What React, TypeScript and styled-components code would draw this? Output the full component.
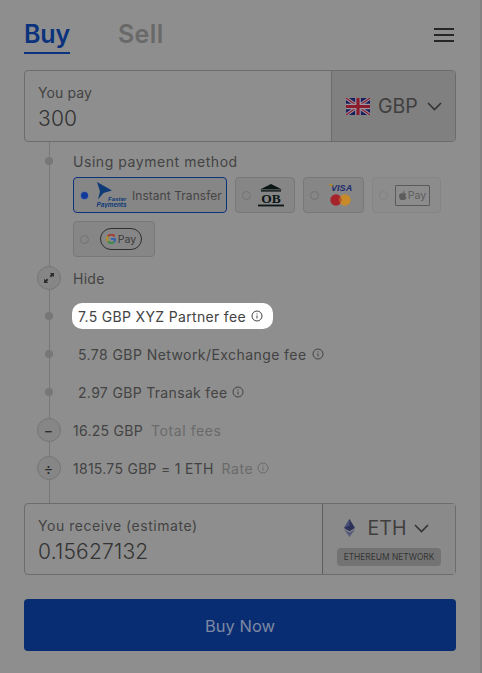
import React from "react";
import styled, { createGlobalStyle } from "styled-components";

const Global = createGlobalStyle`
  html, body { margin: 0; padding: 0; background: #8e8e8e; }
  * { box-sizing: border-box; }
  body { font-family: Inter, "Liberation Sans", sans-serif; }
`;

const Page = styled.div`
  width: 482px;
  height: 673px;
  background: #8e8e8e;
  padding: 0 24px;
  border-right: 2px solid #828282;
  overflow: hidden;
  color: #3f3f3f;
`;

const Header = styled.header`
  height: 70px;
  display: flex;
  justify-content: space-between;
`;

const Tabs = styled.nav`
  display: flex;
  gap: 48px;
  height: 54px;
  padding-top: 18px;
`;

const Tab = styled.div<{ $active?: boolean }>`
  height: 36px;
  font-size: 25px;
  line-height: 33px;
  font-weight: 600;
  letter-spacing: ${(p) => (p.$active ? "-0.2px" : "0.4px")};
  color: ${(p) => (p.$active ? "#0b327c" : "#696969")};
  border-bottom: 2px solid ${(p) => (p.$active ? "#0b327c" : "transparent")};
`;

const Menu = styled.div`
  width: 20px;
  margin-top: 28px;
  margin-right: 2px;
  height: 14px;
  display: flex;
  flex-direction: column;
  justify-content: space-between;
  span {
    display: block;
    height: 2px;
    background: #262626;
  }
`;

const Field = styled.section`
  height: 72px;
  display: flex;
  border: 1px solid #6c6c6c;
  border-radius: 4px;
`;

const FieldMain = styled.div`
  flex: 1;
  padding: 13px 13px 0;
`;

const FieldLabel = styled.div<{ $spacing: number }>`
  font-size: 14px;
  line-height: 17px;
  letter-spacing: ${(p) => p.$spacing}px;
  color: #434343;
`;

const FieldValue = styled.div`
  font-size: 21px;
  line-height: 26px;
  margin-top: 5px;
  letter-spacing: 0.2px;
  font-weight: 300;
  color: #333;
`;

const Select = styled.div`
  width: 124px;
  display: flex;
  align-items: center;
  gap: 8px;
  padding-left: 14px;
  border-left: 1px solid #6c6c6c;
  background: #808080;
  border-radius: 0 3px 3px 0;
  font-size: 19.5px;
  color: #3f3f3f;
`;

const SelectChevron = styled.span`
  display: flex;
  margin-left: 1px;
`;

const Steps = styled.div`
  height: 361px;
  padding-top: 6px;
  background: linear-gradient(#777, #777) 24.5px 0 / 1px 100% no-repeat;
  display: flex;
  flex-direction: column;
`;

const Step = styled.div<{ $gap?: number }>`
  height: 26px;
  margin-top: ${(p) => p.$gap ?? 12}px;
  display: flex;
  align-items: center;
`;

const Rail = styled.div`
  width: 49px;
  flex: none;
  display: flex;
  justify-content: center;
`;

const Dot = styled.span`
  width: 8px;
  height: 8px;
  border-radius: 50%;
  background: #777;
`;

const Circle = styled.span`
  width: 24px;
  height: 24px;
  border-radius: 50%;
  border: 1px solid #767676;
  background: #868686;
  display: flex;
  align-items: center;
  justify-content: center;
  color: #2c2c2c;
  font-size: 14px;
  font-weight: 500;
`;

const Text = styled.span<{ $spacing?: number }>`
  font-size: 14px;
  letter-spacing: ${(p) => p.$spacing ?? 0.27}px;
  color: #434343;
  white-space: nowrap;
`;

const Muted = styled.span`
  font-size: 14px;
  letter-spacing: 0.6px;
  color: #6a6a6a;
  margin-left: 8px;
  display: inline-flex;
  align-items: center;
  gap: 4px;
`;

const FeeText = styled.span<{ $highlight?: boolean; $spacing?: number }>`
  font-size: 14px;
  letter-spacing: ${(p) => p.$spacing ?? 0.33}px;
  white-space: nowrap;
  display: inline-flex;
  align-items: center;
  gap: 5px;
  height: 26px;
  margin-left: -1px;
  padding: 0 10px 0 6px;
  border-radius: 10px;
  color: #434343;
  background: ${(p) => (p.$highlight ? "#ffffff" : "transparent")};
`;

const Methods = styled.div`
  margin: 3px 0 0 49px;
  display: flex;
  flex-wrap: wrap;
  gap: 8px;
  width: 380px;
`;

const Chip = styled.div<{ $w: number; $active?: boolean; $faded?: boolean }>`
  width: ${(p) => p.$w}px;
  height: 36px;
  display: flex;
  align-items: center;
  gap: 7px;
  padding-left: 5px;
  border-radius: 4px;
  border: 1px solid ${(p) => (p.$active ? "#0b327c" : p.$faded ? "#858585" : "#787878")};
  background: ${(p) => (p.$faded ? "#8c8c8c" : "#868686")};
  font-size: 12px;
  letter-spacing: 0.05px;
  color: #454545;
  white-space: nowrap;
`;

const Radio = styled.span<{ $active?: boolean; $faded?: boolean }>`
  width: 9px;
  height: 9px;
  flex: none;
  border-radius: 50%;
  margin-left: 1px;
  border: 1px solid ${(p) => (p.$faded ? "#828282" : "#727272")};
  ${(p) => p.$active && "width:7px;height:7px;margin:0 1px 0 2px;background:#0f3a9c;box-shadow:0 0 0 1px #6f7c9c;border:none;"}
`;

const ReceiveSelect = styled.div`
  width: 133px;
  border-left: 1px solid #5f5f5f;
  background: #8a8a8a;
  display: flex;
  flex-direction: column;
  align-items: center;
  padding-top: 8px;
`;

const CoinRow = styled.div`
  display: flex;
  align-items: center;
  font-size: 19.5px;
  line-height: 32px;
  color: #3f3f3f;
  gap: 13px;
  margin-right: 5px;
`;

const CoinChevron = styled.span`
  display: flex;
  margin-left: -5px;
`;

const Network = styled.div`
  width: 104px;
  height: 18px;
  margin-top: 4px;
  background: #737373;
  border-radius: 4px;
  font-size: 8.4px;
  line-height: 18px;
  text-align: center;
  color: #333;
`;

const BuyButton = styled.div`
  margin-top: 24px;
  height: 52px;
  background: #092d72;
  border-radius: 4px;
  display: flex;
  align-items: center;
  justify-content: center;
  padding-top: 1px;
  font-size: 16.5px;
  color: #7d88a3;
`;

const LogoSlot = styled.span<{ $left?: number; $right?: number }>`
  display: flex;
  margin-left: ${(p) => p.$left ?? 0}px;
  margin-right: ${(p) => p.$right ?? 0}px;
`;

const Info = () => (
  <svg width="12" height="12" viewBox="0 0 12 12" fill="none" stroke="currentColor" strokeWidth="1">
    <circle cx="6" cy="6" r="5" />
    <path d="M6 5.5v3M6 3.4v1" />
  </svg>
);

const Chevron = () => (
  <svg width="15" height="9" viewBox="0 0 15 9" fill="none" stroke="#333" strokeWidth="1.6">
    <path d="M1 1l6.5 6.5L14 1" />
  </svg>
);

const Flag = () => (
  <svg width="24" height="17" viewBox="0 0 60 42" preserveAspectRatio="none">
    <rect width="60" height="42" fill="#17205c" />
    <path d="M0 0l60 42M60 0L0 42" stroke="#9c959e" strokeWidth="8" />
    <path d="M0 0l60 42M60 0L0 42" stroke="#8a1c2e" strokeWidth="3" />
    <path d="M30 0v42M0 21h60" stroke="#9c959e" strokeWidth="14" />
    <path d="M30 0v42M0 21h60" stroke="#8a1c2e" strokeWidth="8" />
  </svg>
);

const Eth = () => (
  <svg width="11" height="18" viewBox="0 0 11 18">
    <path d="M5.5 0 0 9l5.5 3.2L11 9z" fill="#2c3158" />
    <path d="M5.5 0 0 9l5.5-2.4z" fill="#4b5078" />
    <path d="M0 10.2 5.5 18l5.5-7.8-5.5 3.2z" fill="#565a7c" />
  </svg>
);

const Expand = () => (
  <svg width="10" height="10" viewBox="0 0 10 10" fill="#2c2c2c">
    <path d="M5.8 0H10v4.2L8.6 2.8 7 4.4 5.6 3 7.2 1.4z" />
    <path d="M4.2 10H0V5.8l1.4 1.4L3 5.6 4.4 7 2.8 8.6z" />
  </svg>
);

const Foster = () => (
  <svg width="31" height="26" viewBox="0 0 31 26">
    <path d="M1 0l15 8.5-8.5 2.5-5.5 6.5 2-8z" fill="#0f3a78" />
    <text x="12" y="18.5" fontSize="6" fontWeight="700" fontStyle="italic" textLength="18.5" lengthAdjust="spacingAndGlyphs" fill="#0f3a78" fontFamily="Liberation Sans">Faster</text>
    <text x="0.5" y="25" fontSize="6.6" fontWeight="700" fontStyle="italic" textLength="30" lengthAdjust="spacingAndGlyphs" fill="#0f3a78" fontFamily="Liberation Sans">Payments</text>
  </svg>
);

const OpenBanking = () => (
  <svg width="26" height="23" viewBox="0 0 26 23">
    <path d="M13 0 24 5.5H2z" fill="#0d1616" />
    <rect x="3" y="6.2" width="20" height="1.4" fill="#0d1616" />
    <rect x="0" y="20.6" width="26" height="1.8" fill="#0d1616" />
    <text x="13" y="19" textAnchor="middle" fontSize="13.5" fontWeight="700" fill="#0d1616" fontFamily="Liberation Serif">OB</text>
  </svg>
);

const Visa = () => (
  <svg width="24" height="24" viewBox="0 0 24 24">
    <text x="3" y="8" fontSize="9" fontWeight="700" fontStyle="italic" fill="#1b2a6b" fontFamily="Liberation Sans">VISA</text>
    <path d="M0 1h4l1 3z" fill="#b58a22" />
    <circle cx="8" cy="17" r="5.7" fill="#a5242c" />
    <circle cx="17" cy="17" r="5.7" fill="#c98a2a" />
    <path d="M12.5 13.6a5.7 5.7 0 0 1 0 6.8 5.7 5.7 0 0 1 0-6.8z" fill="#b8562a" />
  </svg>
);

const ApplePay = styled.span`
  width: 35px;
  height: 21px;
  border: 1px solid #5a5a5a;
  border-radius: 1px;
  font-size: 10.5px;
  color: #5c5c5c;
  display: flex;
  align-items: center;
  justify-content: center;
  gap: 1px;
`;

const GPay = styled.span`
  width: 42px;
  height: 22px;
  margin-left: 4px;
  border: 1px solid #2f2f2f;
  border-radius: 11px;
  display: flex;
  align-items: center;
  justify-content: center;
  gap: 2px;
  font-size: 10.5px;
  color: #3a3a3a;
`;

const GMark = () => (
  <svg width="10" height="10" viewBox="0 0 10 10" fill="none" strokeWidth="2">
    <path d="M8.6 2.3A4 4 0 0 0 2 2.4" stroke="#a33a30" />
    <path d="M2 2.4a4 4 0 0 0 0 5" stroke="#b08f20" />
    <path d="M2 7.4a4 4 0 0 0 6 .6" stroke="#3d8a4c" />
    <path d="M8 8a4 4 0 0 0 1-3H5" stroke="#3a64a8" />
  </svg>
);

const AppleMark = () => (
  <svg width="8" height="9" viewBox="0 0 8 9" fill="#5c5c5c">
    <path d="M4 2.6C5 2 6.6 2 7.4 3.2 6 4 6.2 6 7.6 6.6 7 8 6 9 5.2 9 4.6 9 4.4 8.7 3.8 8.7S3 9 2.4 9C1.2 9 0 6.8 0 5c0-2.6 2.6-3.2 4-2.4z" />
    <path d="M3.9 2.2C3.9 1 4.8 .2 5.8 0c.1 1.2-.8 2.2-1.9 2.2z" />
  </svg>
);

export default function App() {
  return (
    <Page>
      <Global />
      <Header>
        <Tabs>
          <Tab $active>Buy</Tab>
          <Tab>Sell</Tab>
        </Tabs>
        <Menu>
          <span />
          <span />
          <span />
        </Menu>
      </Header>

      <Field>
        <FieldMain>
          <FieldLabel $spacing={0.1}>You pay</FieldLabel>
          <FieldValue>300</FieldValue>
        </FieldMain>
        <Select>
          <Flag />
          GBP
          <SelectChevron><Chevron /></SelectChevron>
        </Select>
      </Field>

      <Steps>
        <Step $gap={0}>
          <Rail><Dot /></Rail>
          <Text $spacing={0.55}>Using payment method</Text>
        </Step>
        <Methods>
          <Chip $w={154} $active>
            <Radio $active />
            <LogoSlot $right={-2}><Foster /></LogoSlot>
            Instant Transfer
          </Chip>
          <Chip $w={60}>
            <Radio />
            <OpenBanking />
          </Chip>
          <Chip $w={61}>
            <Radio />
            <LogoSlot $left={2}><Visa /></LogoSlot>
          </Chip>
          <Chip $w={69} $faded>
            <Radio $faded />
            <ApplePay><AppleMark />Pay</ApplePay>
          </Chip>
          <Chip $w={82}>
            <Radio />
            <GPay><GMark />Pay</GPay>
          </Chip>
        </Methods>
        <Step $gap={8}>
          <Rail><Circle><Expand /></Circle></Rail>
          <Text>Hide</Text>
        </Step>
        <Step>
          <Rail><Dot /></Rail>
          <FeeText $highlight>7.5 GBP XYZ Partner fee <Info /></FeeText>
        </Step>
        <Step>
          <Rail><Dot /></Rail>
          <FeeText $spacing={0.43}>5.78 GBP Network/Exchange fee <Info /></FeeText>
        </Step>
        <Step>
          <Rail><Dot /></Rail>
          <FeeText>2.97 GBP Transak fee <Info /></FeeText>
        </Step>
        <Step>
          <Rail><Circle>−</Circle></Rail>
          <Text>16.25 GBP</Text>
          <Muted>Total fees</Muted>
        </Step>
        <Step>
          <Rail><Circle>÷</Circle></Rail>
          <Text>1815.75 GBP = 1 ETH</Text>
          <Muted>Rate <Info /></Muted>
        </Step>
      </Steps>

      <Field>
        <FieldMain>
          <FieldLabel $spacing={0.55}>You receive (estimate)</FieldLabel>
          <FieldValue>0.15627132</FieldValue>
        </FieldMain>
        <ReceiveSelect>
          <CoinRow>
            <Eth />
            ETH
            <CoinChevron><Chevron /></CoinChevron>
          </CoinRow>
          <Network>ETHEREUM NETWORK</Network>
        </ReceiveSelect>
      </Field>

      <BuyButton>Buy Now</BuyButton>
    </Page>
  );
}
